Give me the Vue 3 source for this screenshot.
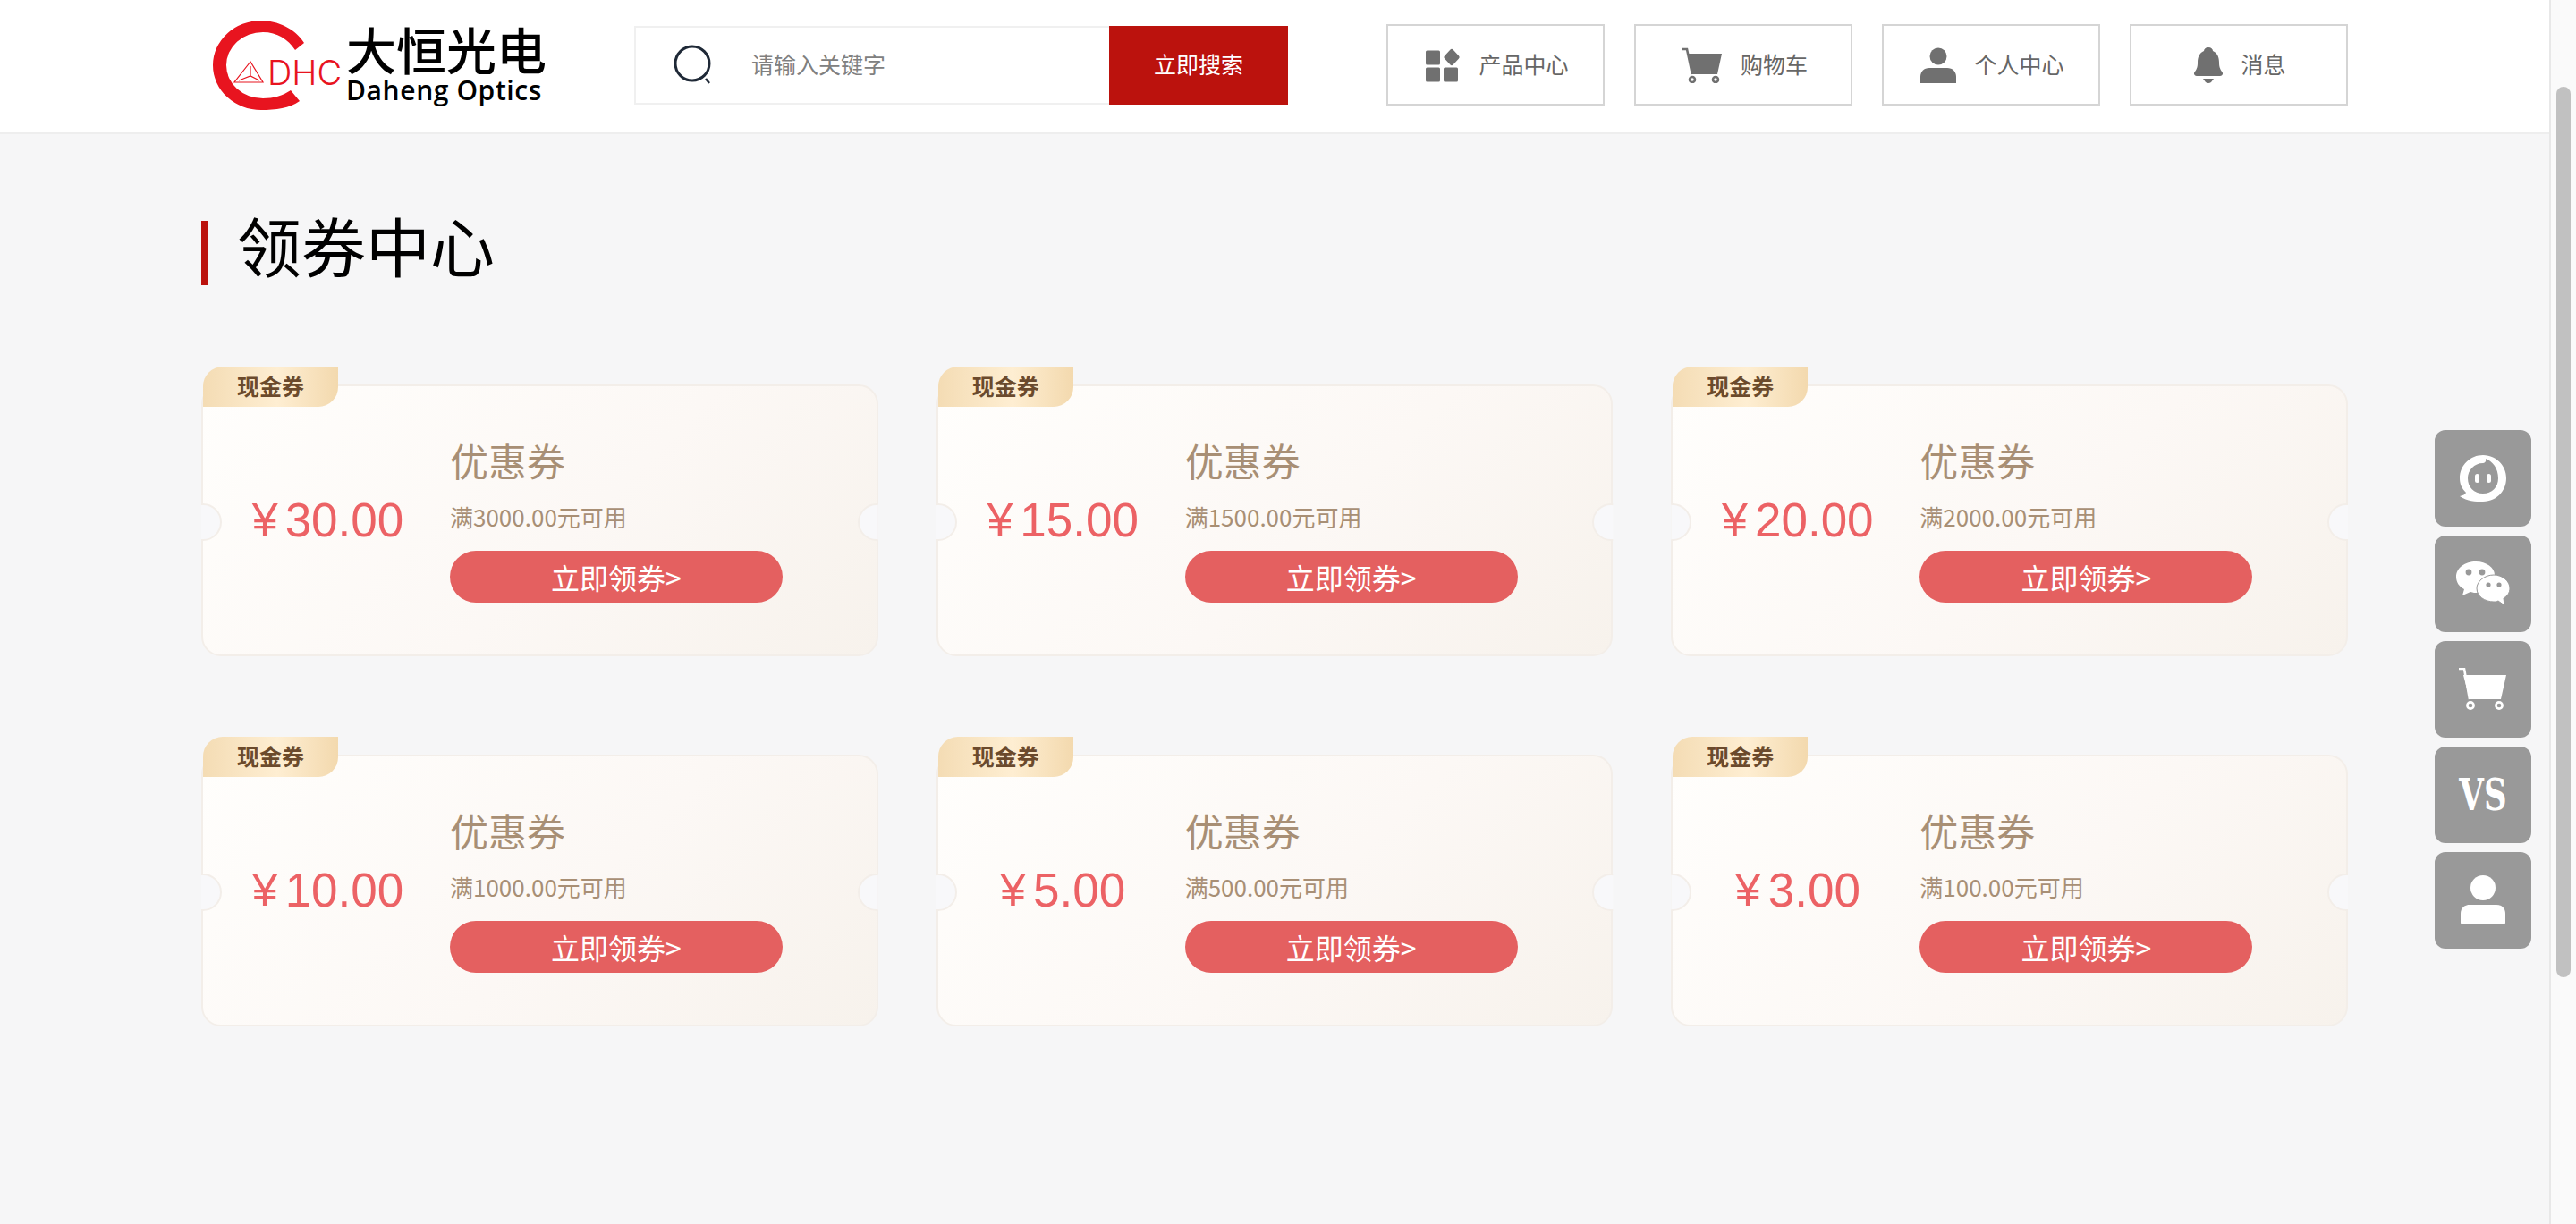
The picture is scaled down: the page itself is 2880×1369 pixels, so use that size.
<script setup>
const navItems = [
  { label: "产品中心", icon: "grid" },
  { label: "购物车", icon: "cart" },
  { label: "个人中心", icon: "user" },
  { label: "消息", icon: "bell" },
];

const coupons = [
  { amount: "30.00", rule: "满3000.00元可用" },
  { amount: "15.00", rule: "满1500.00元可用" },
  { amount: "20.00", rule: "满2000.00元可用" },
  { amount: "10.00", rule: "满1000.00元可用" },
  { amount: "5.00", rule: "满500.00元可用" },
  { amount: "3.00", rule: "满100.00元可用" },
];
</script>

<template>
  <div class="page">
    <div class="main">
      <header class="header">
        <div class="header-inner">
          <div class="logo">
            <div class="logo-mark">
              <svg class="logo-ring" viewBox="0 0 104 102" width="104" height="102">
                <path d="M102 26 C92 10 72 1 54 1 A54 50 0 0 0 0 51 A54 50 0 0 0 54 101 C70 101 86 99 97 91 L87 79 C78 85 68 88 56 88 A41 37 0 0 1 15 51 A41 37 0 0 1 56 14 C72 14 84 22 92 34 Z" fill="#e8141f" />
                <g fill="none" stroke="#e8141f" stroke-width="1.2">
                  <path d="M42 47 L24 70 L56 70 Z" />
                  <path d="M42 52 L42 63 M29 68 L42 63 L52 68" />
                </g>
              </svg>
              <span class="logo-dhc">DHC</span>
            </div>
            <div class="logo-text">
              <div class="logo-cn">大恒光电</div>
              <div class="logo-en">Daheng Optics</div>
            </div>
          </div>

          <div class="search">
            <svg class="search-icon" viewBox="0 0 48 48" width="48" height="48">
              <circle cx="22" cy="22" r="19" fill="none" stroke="#1f2937" stroke-width="3" />
              <path d="M37 39 L41 44" stroke="#1f2937" stroke-width="2.5" fill="none" />
            </svg>
            <span class="search-input">请输入关键字</span>
            <button class="search-btn">立即搜索</button>
          </div>

          <nav class="nav">
            <a v-for="item in navItems" :key="item.label" class="nav-item">
              <svg v-if="item.icon === 'grid'" viewBox="0 0 40 40" width="40" height="40" fill="#707070">
                <rect x="1" y="3.5" width="16" height="16" rx="1.5" />
                <path d="M28.5 2.5 Q30 1 31.5 2.5 L38 9.5 Q39.5 11 38 12.5 L31.5 19.5 Q30 21 28.5 19.5 L22 12.5 Q20.5 11 22 9.5 Z" />
                <rect x="1" y="22.5" width="16" height="16" rx="1.5" />
                <rect x="21" y="22.5" width="16" height="16" rx="1.5" />
              </svg>
              <svg v-else-if="item.icon === 'cart'" viewBox="0 0 46 40" width="46" height="40" fill="#707070">
                <path d="M1 2 H6 L12 30" fill="none" stroke="#707070" stroke-width="2.6" />
                <path d="M7 7 H45 L40 30 H12 Z" />
                <circle cx="12" cy="36" r="3" fill="none" stroke="#707070" stroke-width="2.6" />
                <circle cx="38" cy="36" r="3" fill="none" stroke="#707070" stroke-width="2.6" />
              </svg>
              <svg v-else-if="item.icon === 'user'" viewBox="0 0 40 40" width="40" height="40" fill="#707070">
                <circle cx="20" cy="10" r="9.5" />
                <path d="M0 40 V33 C0 27 4 23 10 23 H30 C36 23 40 27 40 33 V40 Z" />
              </svg>
              <svg v-else viewBox="0 0 32 40" width="32" height="40" fill="#707070">
                <path d="M16 0 C19 0 21 2 21 4 C26 6 28 11 28 17 C28 22 29 24 31 27 C33 29 32 32 29 32 H3 C0 32 -1 29 1 27 C3 24 4 22 4 17 C4 11 6 6 11 4 C11 2 13 0 16 0 Z" />
                <path d="M10 35 H22 L19 39 Q16 41 13 39 Z" />
              </svg>
              <span class="nav-label">{{ item.label }}</span>
            </a>
          </nav>
        </div>
      </header>

      <main class="content">
        <h1 class="title">领券中心</h1>

        <div class="coupons">
          <div v-for="c in coupons" :key="c.amount" class="coupon">
            <span class="tag">现金券</span>
            <i class="notch notch-left"></i>
            <i class="notch notch-right"></i>
            <div class="amount"><span class="yen">¥</span>{{ c.amount }}</div>
            <div class="info">
              <div class="name">优惠券</div>
              <div class="rule">{{ c.rule }}</div>
              <button class="get-btn">立即领券&gt;</button>
            </div>
          </div>
        </div>
      </main>

      <!-- floating tools -->
      <div class="tools">
        <div class="tool">
          <svg viewBox="0 0 54 54" width="54" height="54">
            <path d="M27 1 C41 1 53 12 53 27 C53 42 41 53 27 53 C18 53 10 53 1 47 C5 46 7 45 8 43 C3 38 1 33 1 27 C1 12 13 1 27 1 Z M30 5 C31 8 29 10 27 10 C17 10 10 18 10 27 C10 37 17 44 27 44 C37 44 44 37 44 27 C44 16 38 8 30 5 Z" fill="#fff" fill-rule="evenodd" />
            <rect x="18" y="22" width="5" height="10" rx="2.5" fill="#fff" />
            <rect x="31" y="22" width="5" height="10" rx="2.5" fill="#fff" />
          </svg>
        </div>
        <div class="tool">
          <svg viewBox="0 0 60 50" width="60" height="50">
            <path d="M22 0 C34 0 43 7 43 15 C33 15 23 21 23 31 C23 33 23 34 24 35 C21 35 19 35 16 34 L7 38 L9 31 C3 28 0 23 0 17 C0 7 10 0 22 0 Z" fill="#fff" />
            <path d="M42 15 C52 15 60 22 60 30 C60 35 57 39 53 41 L54 49 L47 44 C45 45 44 45 42 45 C32 45 23 39 23 30 C23 22 32 15 42 15 Z" fill="#fff" stroke="#999" stroke-width="1" />
            <circle cx="14" cy="12" r="3.4" fill="#999" />
            <circle cx="29" cy="12" r="3.4" fill="#999" />
            <circle cx="36" cy="26" r="2.6" fill="#999" />
            <circle cx="48" cy="26" r="2.6" fill="#999" />
          </svg>
        </div>
        <div class="tool">
          <svg viewBox="0 0 54 48" width="54" height="48">
            <path d="M0 1 H6 L12 35" fill="none" stroke="#fff" stroke-width="2.6" />
            <path d="M5 8 H53 L47 35 H12 Z" fill="#fff" />
            <circle cx="13" cy="42" r="3.6" fill="none" stroke="#fff" stroke-width="2.6" />
            <circle cx="45" cy="42" r="3.6" fill="none" stroke="#fff" stroke-width="2.6" />
          </svg>
        </div>
        <div class="tool"><span class="tool-vs">VS</span></div>
        <div class="tool">
          <svg viewBox="0 0 52 56" width="52" height="56">
            <circle cx="26" cy="14" r="14" fill="#fff" />
            <path d="M1 53 V43 C1 37 5 33 11 33 H41 C47 33 51 37 51 43 V53 C51 54 50 55 49 55 H3 C2 55 1 54 1 53 Z" fill="#fff" />
          </svg>
        </div>
      </div>
    </div>

    <aside class="scrollbar">
      <div class="thumb"></div>
    </aside>
  </div>
</template>

<style scoped>
.page {
  display: flex;
  height: 1369px;
  overflow: hidden;
  background: #f6f6f7;
  font-family: "Noto Sans CJK SC", "Liberation Sans", sans-serif;
}

.main {
  position: relative;
  flex: 1;
  min-width: 0;
}

.header {
  height: 145px;
  padding-bottom: 3px;
  background: #fff;
  border-bottom: 2px solid #eeeeee;
}

.header-inner {
  display: flex;
  align-items: center;
  width: 2400px;
  height: 100%;
  margin: 0 auto;
}

.logo {
  display: flex;
  align-items: center;
  flex-shrink: 0;
  width: 484px;
  padding-left: 13px;
  box-sizing: border-box;
}

.logo-mark {
  position: relative;
  width: 149px;
  height: 102px;
}

.logo-dhc {
  position: absolute;
  left: 61px;
  top: 39px;
  font-family: Inter, "Liberation Sans", sans-serif;
  font-size: 38px;
  line-height: 40px;
  font-weight: 300;
  color: #e8141f;
}

.logo-text {
  margin-top: -3px;
}

.logo-cn {
  font-size: 56px;
  line-height: 60px;
  font-weight: 500;
  color: #000;
}

.logo-en {
  font-family: "Open Sans", sans-serif;
  font-size: 30px;
  line-height: 34px;
  font-weight: 600;
  color: #000;
  letter-spacing: 0.6px;
}

.search {
  display: flex;
  align-items: center;
  flex-shrink: 0;
  width: 731px;
  height: 88px;
  box-sizing: border-box;
  background: #fff;
  border: 2px solid #f0f0f0;
}

.search-icon {
  margin-left: 41px;
}

.search-input {
  margin-left: 40px;
  padding-bottom: 3px;
  flex: 1;
  font-size: 25px;
  color: #808080;
}

.search-btn {
  flex-shrink: 0;
  width: 200px;
  height: 88px;
  margin: -2px;
  padding: 0 0 3px;
  border: none;
  background: #bb120d;
  color: #fff;
  font-family: inherit;
  font-size: 25px;
}

.nav {
  display: flex;
  gap: 33px;
  margin-left: 110px;
}

.nav-item {
  display: flex;
  align-items: center;
  justify-content: center;
  gap: 20px;
  width: 244px;
  height: 91px;
  padding-left: 3px;
  box-sizing: border-box;
  border: 2px solid #d5d5d5;
  font-size: 25px;
  color: #666;
}

.nav-label {
  padding-bottom: 3px;
}

.content {
  width: 2400px;
  margin: 0 auto;
}

.title {
  height: 72px;
  margin: 97px 0 0;
  border-left: 8px solid #bb120d;
  padding-left: 32px;
  font-size: 72px;
  line-height: 52px;
  font-weight: 400;
  color: #000;
}

.coupons {
  display: grid;
  grid-template-columns: repeat(3, 1fr);
  column-gap: 65px;
  row-gap: 110px;
  margin-top: 111px;
}

.coupon {
  position: relative;
  display: flex;
  height: 304px;
  box-sizing: border-box;
  border: 2px solid #f3eee9;
  border-radius: 22px;
  background: linear-gradient(135deg, #fffefc 0%, #fcf8f5 55%, #f7f2ec 100%);
}

.tag {
  position: absolute;
  left: 0;
  top: -22px;
  width: 151px;
  height: 45px;
  border-radius: 22px 0 22px 0;
  background: linear-gradient(90deg, #f4dcb4 0%, #feeed2 55%, #f3d9ae 100%);
  font-size: 25px;
  line-height: 43px;
  font-weight: 700;
  text-align: center;
  color: #6b4a2c;
}

.notch {
  position: absolute;
  top: 50%;
  width: 38px;
  height: 38px;
  margin-top: -19px;
  border: 2px solid #f3eee9;
  border-radius: 50%;
  background: #f8f8fa;
}

.notch-left {
  left: -21px;
  clip-path: inset(-2px -2px -2px 19px);
}

.notch-right {
  right: -21px;
  clip-path: inset(-2px 19px -2px -2px);
}

.amount {
  display: flex;
  align-items: center;
  justify-content: center;
  width: 279px;
  padding-bottom: 2px;
  font-family: "Liberation Sans", sans-serif;
  font-size: 53px;
  color: #ec6265;
}

.yen {
  margin-right: 8px;
  font-size: 52px;
}

.info {
  margin-left: -3px;
  padding-top: 54px;
}

.name {
  font-size: 43px;
  line-height: 56px;
  color: #a88f75;
}

.rule {
  margin-top: 18px;
  font-size: 26px;
  line-height: 36px;
  color: #a88f75;
}

.get-btn {
  display: block;
  width: 372px;
  height: 58px;
  margin-top: 20px;
  padding: 0;
  border: none;
  border-radius: 29px;
  background: #e46060;
  color: #fff;
  font-family: inherit;
  font-size: 32px;
  line-height: 58px;
}

.tools {
  position: absolute;
  left: 2722px;
  top: 481px;
  display: flex;
  flex-direction: column;
  gap: 10px;
}

.tool {
  display: flex;
  align-items: center;
  justify-content: center;
  width: 108px;
  height: 108px;
  border-radius: 12px;
  background: #999;
}

.tool-vs {
  font-family: "DejaVu Serif", serif;
  font-size: 48px;
  font-weight: 700;
  color: #fff;
  transform: scaleX(0.74);
}

.scrollbar {
  width: 30px;
  flex-shrink: 0;
  padding: 97px 0 0 6px;
  box-sizing: border-box;
  background: #fafafa;
  border-left: 2px solid #e8e8e8;
}

.thumb {
  width: 16px;
  height: 996px;
  border-radius: 8px;
  background: #c1c1c1;
}
</style>

<style>
html,
body {
  margin: 0;
}
</style>
